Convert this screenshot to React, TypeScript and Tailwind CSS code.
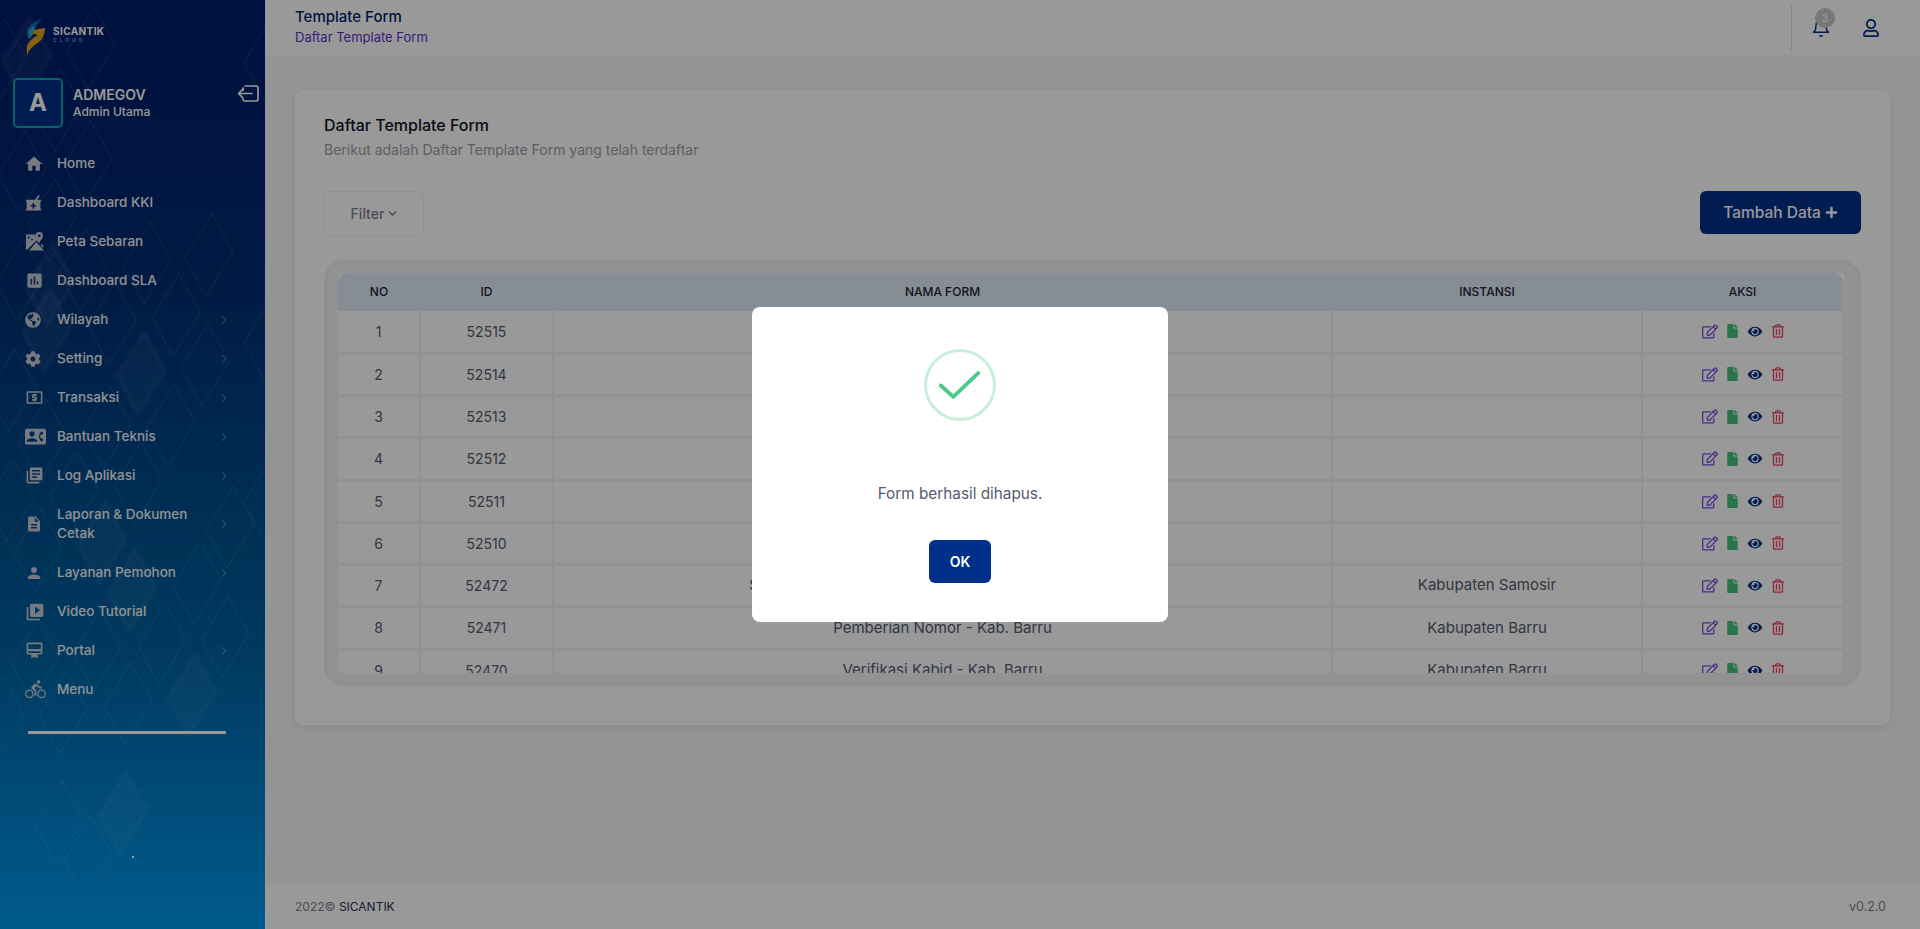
import React from "react";
import { FaGlobeAmericas, FaCog, FaChevronDown, FaPlus, FaRegEdit, FaFile, FaEye, FaRegTrashAlt, FaRegUser } from "react-icons/fa";
import { MdHome, MdAssessment, MdLocalAtm, MdContactPhone, MdLibraryBooks, MdDescription, MdPerson, MdVideoLibrary, MdCardMembership, MdDirectionsBike } from "react-icons/md";
import { LuChevronRight, LuBell } from "react-icons/lu";

const font = "font-['Inter','Liberation_Sans',sans-serif]";

function Mortar({ className }: { className?: string }) {
  return (
    <svg viewBox="0 0 18 18" className={className} fill="currentColor">
      <path fillRule="evenodd" d="M1 6h9.6l3.6-5 1.5 1-2.9 4H17v2h-.8v7l1 1.6v.9H.8v-.9l1-1.6V8H1V6Zm7 3.5v2.3H5.800v1.400H8v2.300h1.600v-2.300h2.200v-1.400H9.600V9.500H8Z" />
    </svg>
  );
}

function MapPin({ className }: { className?: string }) {
  return (
    <svg viewBox="0 0 20 20" className={className} fill="currentColor">
      <path d="M1 2.500h10.200c-.5 2.300.8 4.200 3 7.200l1-1.200V12l-3.200-3L6 15l-3.500 3.500H1V2.500Zm3 2.200a1.200 1.200 0 1 0 0 2.400 1.200 1.200 0 0 0 0-2.400Zm3.300 2.500a.9.900 0 1 0 0 1.800.9.900 0 0 0 0-1.800Z" />
      <path fillRule="evenodd" d="M15 0a4 4 0 0 1 4 4c0 2.400-2.400 4.800-4 7-1.600-2.200-4-4.600-4-7a4 4 0 0 1 4-4Zm0 2.500a1.500 1.500 0 1 0 0 3 1.500 1.500 0 0 0 0-3Z" />
      <path d="M11.800 10.500 20 19.500H4.500l7.300-9Z" />
      <path d="M17 12l2 2.200V17l-2-2.500V12Z" />
    </svg>
  );
}

const menu: { label: string; icon: React.ReactNode; arrow?: boolean; tall?: boolean }[] = [
  { label: "Home", icon: <MdHome className="w-[20px] h-[20px] -ml-px" /> },
  { label: "Dashboard KKI", icon: <Mortar className="w-[17px] h-[17px]" /> },
  { label: "Peta Sebaran", icon: <MapPin className="w-[19px] h-[19px]" /> },
  { label: "Dashboard SLA", icon: <MdAssessment className="w-[19px] h-[19px]" /> },
  { label: "Wilayah", icon: <FaGlobeAmericas className="w-[16px] h-[16px]" />, arrow: true },
  { label: "Setting", icon: <FaCog className="w-[16px] h-[16px]" />, arrow: true },
  { label: "Transaksi", icon: <MdLocalAtm className="w-[19px] h-[19px]" />, arrow: true },
  { label: "Bantuan Teknis", icon: <MdContactPhone className="w-[21px] h-[21px]" />, arrow: true },
  { label: "Log Aplikasi", icon: <MdLibraryBooks className="w-[19px] h-[19px]" />, arrow: true },
  { label: "Laporan & Dokumen Cetak", icon: <MdDescription className="w-[18px] h-[18px]" />, arrow: true, tall: true },
  { label: "Layanan Pemohon", icon: <MdPerson className="w-[18px] h-[18px]" />, arrow: true },
  { label: "Video Tutorial", icon: <MdVideoLibrary className="w-[20px] h-[20px]" /> },
  { label: "Portal", icon: <MdCardMembership className="w-[19px] h-[19px]" />, arrow: true },
  { label: "Menu", icon: <MdDirectionsBike className="w-[21px] h-[21px]" /> },
];

const outlined = [[91,48],[58,110],[88,162],[22,172],[52,220],[147,263],[209,255],[83,270],[20,280],[112,323],[176,315],[205,365],[12,390],[171,425],[43,440],[107,427],[138,483],[74,492],[10,500],[38,550],[230,527],[197,583],[35,660],[97,650],[162,643],[225,637],[128,703],[63,712],[0,717],[59,822],[88,857],[268,60],[268,340],[268,500],[2,60]];
const filled = [[27,58],[47,330],[141,373],[102,542],[132,590],[192,695],[123,813],[50,285]];
const points = (x: number, y: number) => `${x + 3},${y - 41} ${x + 24},${y - 3} ${x - 3},${y + 41} ${x - 24},${y + 3}`;

function Pattern() {
  return (
    <svg className="absolute inset-0 w-full h-full" viewBox="0 0 265 929" preserveAspectRatio="none">
      <defs>
        <clipPath id="side-clip"><rect x="0" y="0" width="265" height="880" /></clipPath>
      </defs>
      <g clipPath="url(#side-clip)" strokeLinejoin="round">
        {outlined.map(([x, y], i) => (
          <polygon key={i} points={points(x, y)} fill="none" stroke="#ffffff" strokeOpacity="0.11" strokeWidth="1" />
        ))}
        {filled.map(([x, y], i) => (
          <polygon key={i} points={points(x, y)} fill="#ffffff" fillOpacity="0.04" stroke="#ffffff" strokeOpacity="0.04" strokeWidth="5" />
        ))}
      </g>
    </svg>
  );
}

function Logo() {
  return (
    <div className="flex items-center h-[42px] pl-[24px] mt-[14px]">
      <svg viewBox="0 0 22 42" className="w-[22px] h-[42px] shrink-0">
        <path d="M21 0C19 5 9 8 4.500 13 2 16 3 23 5 25c1-3 3-5 6-7-2-3 3-9 10-18Z" fill="#0f6fae" />
        <path d="M6 15c-2 3-2 7 0 10 1-3 3-5 5-7l-1-6-4 3Z" fill="#38a8d8" />
        <path d="M9 17c4-2 10-3 12-3 0 5-2 11-6 14-4 3-10 6-12 14l-.2-9c1-5 5-8 8-10 1.500-1 3-2 2-3-2 1-4 .5-3.800-3Z" fill="#e0a21a" />
      </svg>
      <div className="ml-[7px] -mt-[1px] flex flex-col text-white">
        <span className="text-[10px] font-bold leading-[11px] tracking-[0.4px]">SICANTIK</span>
        <span className="text-[5px] leading-[6px] tracking-[3px] opacity-70">CLOUD</span>
      </div>
    </div>
  );
}

function Sidebar() {
  return (
    <aside className="relative w-[265px] shrink-0 h-[929px] overflow-hidden bg-[linear-gradient(180deg,#001b69_0%,#002c70_30%,#00619f_70%,#0098ec_100%)] text-white">
      <Pattern />
      <div className="relative flex flex-col">
        <Logo />
        <div className="flex items-center mt-[22px] pl-[13px]">
          <div className="w-[50px] h-[50px] rounded-[5px] border-2 border-[#10a5a6] bg-[#003087] flex items-center justify-center text-[24px] font-bold">A</div>
          <div className="ml-[10px] -mt-[1px] flex flex-col">
            <span className="text-[14px] font-semibold leading-[18px]">ADMEGOV</span>
            <span className="text-[12px] font-medium leading-[15px]">Admin Utama</span>
          </div>
          <svg viewBox="0 0 22 17" className="absolute left-[237px] top-[85px] w-[22px] h-[17px]" fill="none" stroke="currentColor" strokeWidth="1.700" strokeLinecap="round" strokeLinejoin="round">
            <path d="M8 1h11a2 2 0 0 1 2 2v11a2 2 0 0 1-2 2H8a2 2 0 0 1-2-1.600M6 3v2.500" />
            <path d="M15 8.500H2M6 4 1.500 8.500 6 13" />
          </svg>
        </div>
        <nav className="flex flex-col mt-[16px] pl-[25px] pr-[36px]">
          {menu.map((m) => (
            <div key={m.label} className={`flex items-center ${m.tall ? "h-[58px]" : "h-[39px]"}`}>
              <span className="w-[32px] shrink-0 flex items-center text-[#c6cad6]">{m.icon}</span>
              <span className="flex-1 text-[13.500px] font-medium leading-[19px] w-[140px] text-[#f2f3f6]">{m.label}</span>
              {m.arrow && <LuChevronRight strokeWidth={1.500} className="w-[14px] h-[14px] text-[#98a2b8] mr-[-2px]" />}
            </div>
          ))}
        </nav>
        <div className="ml-[28px] mt-[22px] w-[198px] h-[3px] bg-white" />
        <div className="ml-[132px] mt-[122px] w-[2px] h-[2px] bg-white" />
      </div>
    </aside>
  );
}

const rows = [
  { no: 1, id: 52515 },
  { no: 2, id: 52514 },
  { no: 3, id: 52513 },
  { no: 4, id: 52512 },
  { no: 5, id: 52511 },
  { no: 6, id: 52510 },
  { no: 7, id: 52472, name: "Surat Rekomendasi Pemberian Nomor I - Kab. Samosir", inst: "Kabupaten Samosir" },
  { no: 8, id: 52471, name: "Pemberian Nomor - Kab. Barru", inst: "Kabupaten Barru" },
  { no: 9, id: 52470, name: "Verifikasi Kabid - Kab. Barru", inst: "Kabupaten Barru" },
];

function Actions() {
  return (
    <div className="flex items-center justify-center gap-[9px]">
      <FaRegEdit className="w-[16px] h-[15px] text-[#7a4fe0]" />
      <FaFile className="w-[11px] h-[14px] text-[#41c47c]" />
      <FaEye className="w-[16px] h-[13px] text-[#003087]" />
      <FaRegTrashAlt className="w-[12px] h-[14px] text-[#ee3f63]" />
    </div>
  );
}

function DataTable() {
  const cell = "text-center text-[#555a70] border-r-[2px] border-b-[3px] border-[#f2f2f2] align-middle p-0";
  return (
    <div className="mt-[24px] h-[426px] rounded-[20px] border-[4px] border-[#efefef] bg-[#f4f4f4] pl-[10px] pr-[13px] pt-[9px] pb-[9px] overflow-hidden">
      <div className="h-full overflow-hidden bg-white">
        <table className="w-[1505px] table-fixed border-collapse">
          <colgroup>
            <col className="w-[82px]" />
            <col className="w-[133px]" />
            <col className="w-[779px]" />
            <col className="w-[310px]" />
            <col className="w-[201px]" />
          </colgroup>
          <thead>
            <tr className="h-[38px] bg-[#dfebf9] text-[12px] text-[#1d2233]">
              <th className="font-medium rounded-tl-[10px]">NO</th>
              <th className="font-medium">ID</th>
              <th className="font-medium">NAMA FORM</th>
              <th className="font-medium">INSTANSI</th>
              <th className="font-medium rounded-tr-[10px]">AKSI</th>
            </tr>
          </thead>
          <tbody>
            {rows.map((r) => (
              <tr key={r.id} className="h-[42.250px]">
                <td className={`${cell} text-[14px]`}>{r.no}</td>
                <td className={`${cell} text-[14px]`}>{r.id}</td>
                <td className={`${cell} text-[15px]`}>{r.name ?? ""}</td>
                <td className={`${cell} text-[15px]`}>{r.inst ?? ""}</td>
                <td className={`${cell} border-r-0`}><Actions /></td>
              </tr>
            ))}
          </tbody>
        </table>
      </div>
    </div>
  );
}

function Main() {
  return (
    <div className="flex-1 min-w-0 h-[929px] flex flex-col bg-[#f5f7fa]">
      <header className="h-[55px] shrink-0 bg-white flex items-center pl-[30px] pr-[41px]">
        <div className="flex-1 flex flex-col -mt-[3px]">
          <span className="text-[15px] font-medium leading-[20px] text-[#00246b]">Template Form</span>
          <span className="mt-[2px] text-[13px] leading-[16px] text-[#5b31c4]">Daftar Template Form</span>
        </div>
        <div className="w-px h-[45px] bg-[#dcdcdc]" />
        <div className="relative ml-[19px] mt-[1px] text-[#003087]">
          <LuBell strokeWidth={1.700} className="w-[20px] h-[20px]" />
          <span className="absolute -top-[10px] -right-[4px] w-[20px] h-[20px] rounded-full bg-[#c9c9ca] text-white text-[11px] flex items-center justify-center">3</span>
        </div>
        <FaRegUser className="ml-[32px] w-[16px] h-[18px] text-[#003087]" />
      </header>
      <main className="flex-1 min-h-0 px-[30px] pt-[35px]">
        <section className="h-[635px] rounded-[8px] bg-white shadow-[0_2px_10px_rgba(0,0,0,0.08)] px-[29px] pt-[25px]">
          <h2 className="text-[16px] font-medium leading-[20px] text-[#0f1322]">Daftar Template Form</h2>
          <p className="mt-[5px] text-[14px] leading-[20px] text-[#9b9ca9]">Berikut adalah Daftar Template Form yang telah terdaftar</p>
          <div className="mt-[31px] flex items-start justify-between">
            <button className="w-[100px] h-[45px] rounded-[6px] border border-[#f0f0f0] flex items-center justify-center gap-[4px] text-[14px] font-medium text-[#7c7e8c]">
              Filter <FaChevronDown className="w-[9px] h-[9px]" />
            </button>
            <button className="w-[161px] h-[43px] rounded-[6px] bg-[#003087] flex items-center justify-center gap-[4px] text-[15.500px] font-medium text-white">
              Tambah Data <FaPlus className="w-[13px] h-[13px]" />
            </button>
          </div>
          <DataTable />
        </section>
      </main>
      <footer className="h-[44px] shrink-0 bg-white flex items-center justify-between pl-[30px] pr-[34px] text-[12px] text-[#7c7e8c]">
        <span>2022© <span className="text-[#2a3150]">SICANTIK</span></span>
        <span className="text-[12.500px]">v0.2.0</span>
      </footer>
    </div>
  );
}

function Modal() {
  return (
    <div className="fixed inset-0 z-50 bg-black/40 flex items-center justify-center">
      <div className="w-[416px] h-[315px] rounded-[8px] bg-white flex flex-col items-center">
        <div className="mt-[42px] w-[72px] h-[72px] rounded-full border-[3px] border-[#c9efdb] flex items-center justify-center">
          <svg viewBox="0 0 44 30" className="w-[42px] h-[29px]" fill="none" stroke="#48cb89" strokeWidth="4" strokeLinecap="round" strokeLinejoin="round">
            <path d="M2 15l13 12L41 2" />
          </svg>
        </div>
        <p className="mt-[63px] text-[15.300px] leading-[20px] text-[#545a6e]">Form berhasil dihapus.</p>
        <button className="mt-[36px] w-[62px] h-[43px] rounded-[6px] bg-[#003087] text-white text-[14px] font-semibold">OK</button>
      </div>
    </div>
  );
}

export default function App() {
  return (
    <div className={`flex w-[1920px] h-[929px] overflow-hidden ${font}`}>
      <Sidebar />
      <Main />
      <Modal />
    </div>
  );
}
